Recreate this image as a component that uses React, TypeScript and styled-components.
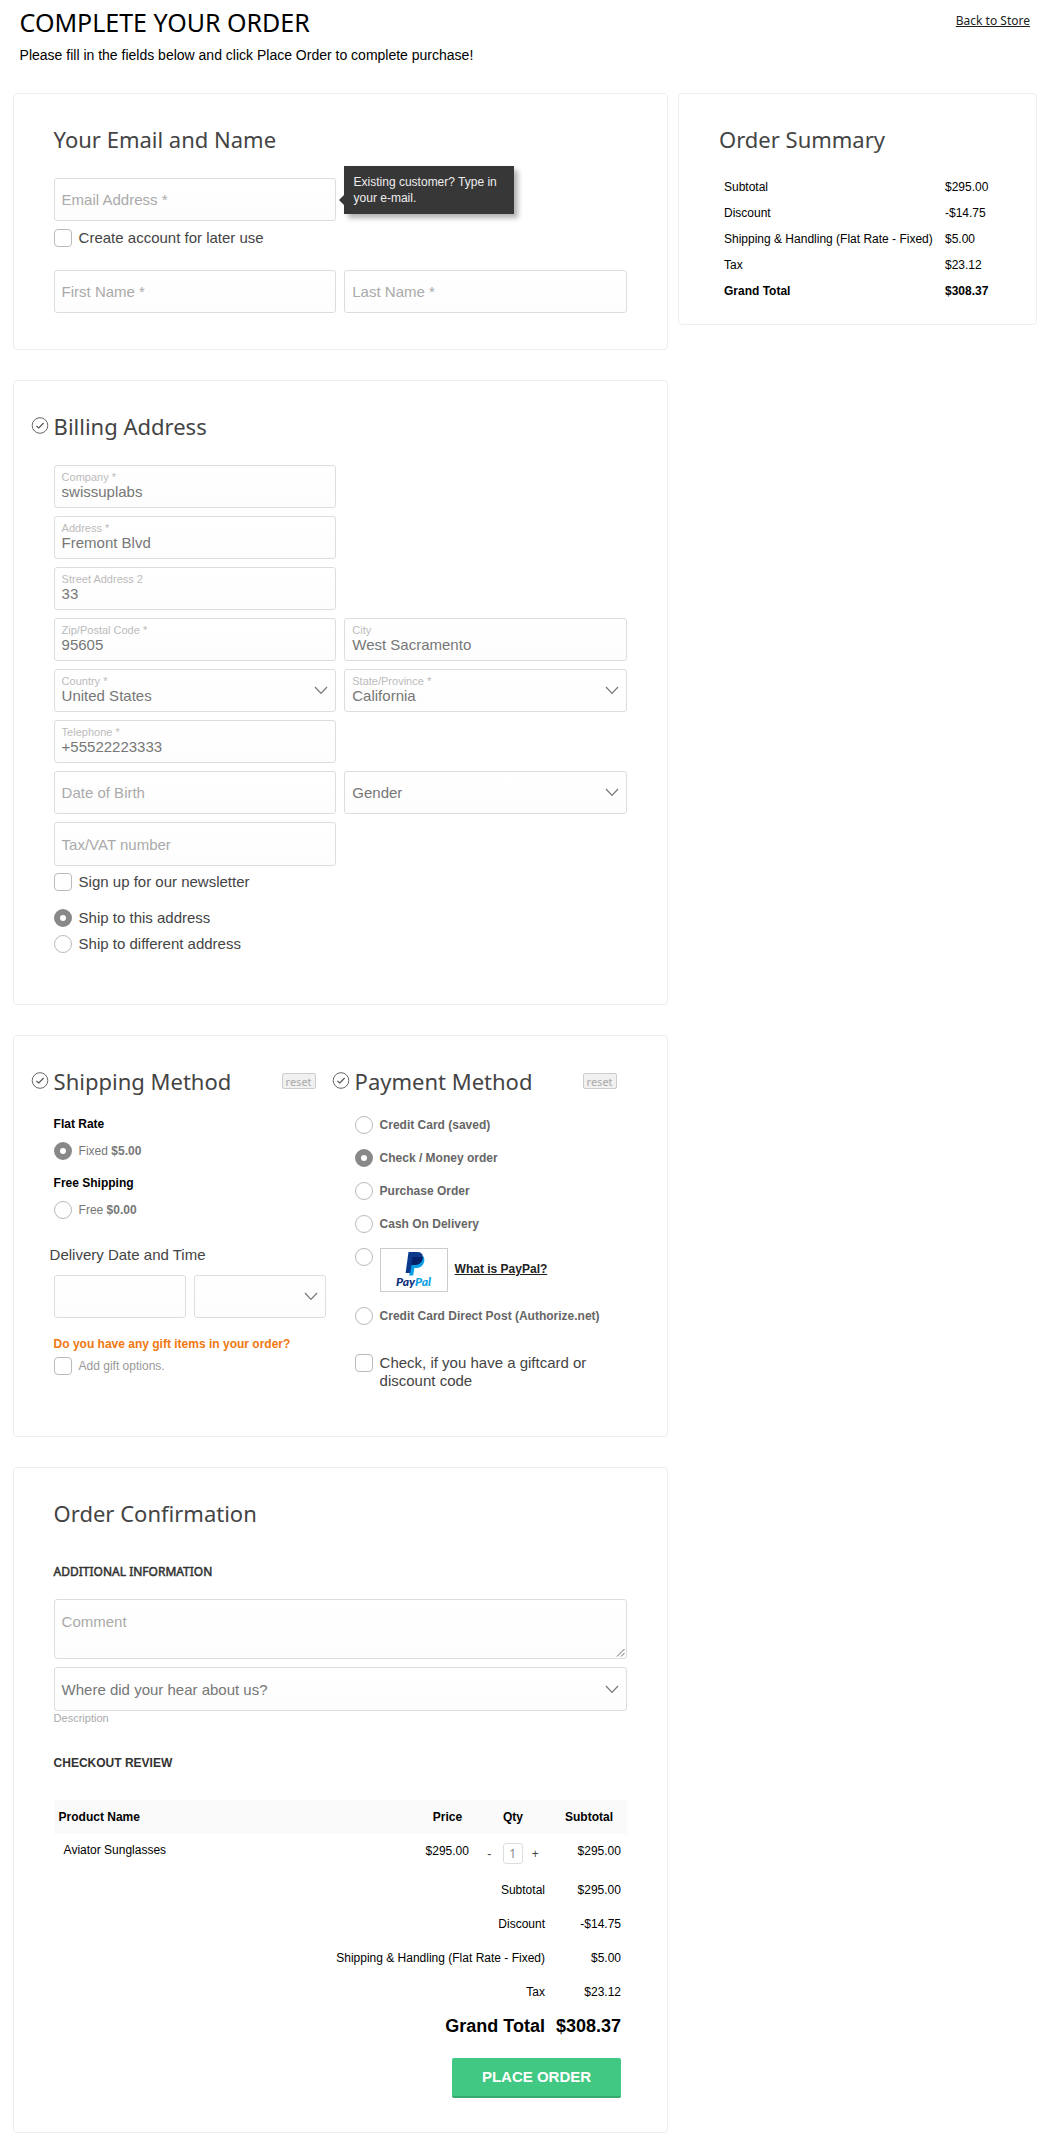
import React from "react";
import styled, { createGlobalStyle, css } from "styled-components";

const sans = '"Liberation Sans", Arial, Helvetica, sans-serif';
const noto = '"Noto Sans", "Open Sans", sans-serif';

const GlobalStyle = createGlobalStyle`
  * { box-sizing: border-box; }
  body { margin: 0; background: #fff; font-family: ${sans}; font-size: 12px; color: #000; }
  h1, h2, h3, p { margin: 0; font-weight: normal; }
  button { font-family: inherit; padding: 0; }
`;

const Page = styled.main`
  width: 1050px;
  height: 2145px;
  padding: 0 13px 0 12.6px;
`;
const Header = styled.header`
  display: flex;
  justify-content: space-between;
  height: 93px;
  padding: 0 7px 0 7px;
`;
const Title = styled.h1`
  font: 25px/34px ${noto};
  padding-top: 5px;
  color: #000;
`;
const Intro = styled.p`
  font-size: 14px;
  line-height: 20px;
  padding-top: 6px;
`;
const BackLink = styled.a`
  font: 12px/18px ${noto};
  color: #222;
  text-decoration: underline;
  margin-top: 12px;
`;
const Columns = styled.div`
  display: grid;
  grid-template-columns: 655.4px 359px;
  gap: 10px;
  align-items: start;
`;
const Stack = styled.div`
  display: flex;
  flex-direction: column;
  gap: 30px;
`;
const Card = styled.section<{ $h: number; $split?: boolean }>`
  height: ${(p) => p.$h}px;
  border: 1px solid #eee;
  border-radius: 4px;
  padding: 0 40px;
  ${(p) => p.$split && css`
    display: grid;
    grid-template-columns: 301px 1fr;
    padding-right: 20px;
  `}
`;
const Heading = styled.h2`
  position: relative;
  display: flex;
  align-items: center;
  padding-top: 29px;
  height: 61px;
  font: 22px/30px ${noto};
  color: #444;
`;
const DoneMark = styled.svg`
  position: absolute;
  left: -22.6px;
  top: 35px;
  width: 18px;
  height: 18px;
`;
const ResetButton = styled.button`
  margin-left: auto;
  width: 34px;
  height: 16px;
  border: 1px solid #ccc;
  border-radius: 2px;
  background: #f1f1f1;
  color: #aaa;
  font: 11px/13px ${noto};
`;
const Fields = styled.div<{ $mt: number }>`
  display: grid;
  grid-template-columns: 1fr 1fr;
  gap: 8px;
  margin-top: ${(p) => p.$mt}px;
`;
const FieldBox = styled.div<{ $h?: number; $start?: boolean; $wide?: boolean }>`
  position: relative;
  display: flex;
  flex-direction: column;
  height: ${(p) => p.$h ?? 43}px;
  ${(p) => p.$start && "grid-column: 1;"}
  ${(p) => p.$wide && "grid-column: 1 / -1;"}
  border: 1px solid #ddd;
  border-radius: 3px;
  padding: 0 7px;
  background: linear-gradient(#fff, #fdfdfd);
`;
const FloatLabel = styled.span`
  font-size: 11px;
  line-height: 13px;
  height: 11px;
  margin-top: 5px;
  color: #bbb;
`;
const Value = styled.span`
  font-size: 15px;
  line-height: 18px;
  margin-top: 1px;
  color: #777;
`;
const Placeholder = styled.span<{ $dark?: boolean; $mt?: number }>`
  font-size: 15px;
  line-height: 18px;
  margin-top: ${(p) => p.$mt ?? 12}px;
  color: ${(p) => (p.$dark ? "#777" : "#aaa")};
`;
const ChevronIcon = styled.svg`
  position: absolute;
  right: 7px;
  top: calc(50% - 4.5px);
  width: 14px;
  height: 9px;
`;
const GripIcon = styled.svg`
  position: absolute;
  right: 1px;
  bottom: 1px;
  width: 9px;
  height: 9px;
`;
const Tooltip = styled.div`
  position: absolute;
  left: 289px;
  top: -13px;
  width: 170px;
  height: 48px;
  padding: 8px 10px;
  background: #373737;
  color: #eee;
  font-size: 12px;
  line-height: 16px;
  box-shadow: 4px 4px 5px rgba(0, 0, 0, 0.3);
  &::before {
    content: "";
    position: absolute;
    left: -5px;
    top: 29px;
    border: 5px solid transparent;
    border-right-color: #373737;
    border-left: 0;
  }
`;
const Choice = styled.label<{ $mt?: number }>`
  display: flex;
  align-items: flex-start;
  gap: 7px;
  min-height: 18px;
  margin-top: ${(p) => p.$mt ?? 0}px;
`;
const ChoiceText = styled.span<{ $size?: number; $color?: string; $bold?: boolean }>`
  font-size: ${(p) => p.$size ?? 15}px;
  font-weight: ${(p) => (p.$bold ? "bold" : "normal")};
  line-height: 18px;
  color: ${(p) => p.$color ?? "#444"};
`;
const CheckMark = styled.i`
  flex: none;
  width: 18px;
  height: 18px;
  border: 1px solid #bbb;
  border-radius: 4px;
  background: #fff;
`;
const RadioMark = styled.i<{ $on?: boolean }>`
  flex: none;
  width: 18px;
  height: 18px;
  border: ${(p) => (p.$on ? "6px solid #888" : "1px solid #bbb")};
  border-radius: 50%;
  background: #fff;
`;
const Intros = styled.div``;
const MethodTitle = styled.p<{ $mt: number; $color?: string }>`
  font-weight: bold;
  line-height: 14px;
  margin-top: ${(p) => p.$mt}px;
  color: ${(p) => p.$color ?? "#000"};
`;
const DeliveryTitle = styled.p`
  font-size: 15px;
  line-height: 18px;
  margin: 27px 0 11px -4px;
  color: #444;
`;
const DeliveryFields = styled.div`
  display: grid;
  grid-template-columns: 132px 132px;
  gap: 8px;
`;
const MethodColumn = styled.div`
  ${Heading} { width: 262px; }
`;
const PayPalBox = styled.span`
  display: flex;
  width: 68px;
  height: 44px;
  border: 1px solid #ccc;
`;
const PayPalLink = styled.a`
  align-self: center;
  font-weight: bold;
  line-height: 14px;
  color: #222;
  text-decoration: underline;
  margin-top: -2px;
`;
const SubHeading = styled.h3<{ $mt: number; $noto?: boolean }>`
  font: bold 12px/16px ${sans};
  ${(p) => p.$noto && css`
    font: 12px/16px ${noto};
    -webkit-text-stroke: 0.5px #333;
  `}
  color: #333;
  margin-top: ${(p) => p.$mt}px;
`;
const Note = styled.p`
  font-size: 11px;
  line-height: 14px;
  color: #aaa;
`;
const SummaryTable = styled.dl`
  display: grid;
  grid-template-columns: 221px 1fr;
  grid-auto-rows: 26px;
  margin: 19px 0 0;
  padding-left: 5px;
  line-height: 26px;
  white-space: nowrap;
`;
const SummaryTerm = styled.dt<{ $bold?: boolean }>`
  font-weight: ${(p) => (p.$bold ? "bold" : "normal")};
`;
const SummaryValue = styled.dd<{ $bold?: boolean }>`
  margin: 0;
  font-weight: ${(p) => (p.$bold ? "bold" : "normal")};
`;
const cols = css`
  display: grid;
  grid-template-columns: 1fr 55px 76px 76px;
`;
const ReviewHead = styled.div`
  ${cols}
  margin-top: 29px;
  height: 34px;
  line-height: 34px;
  background: #fafafa;
  font-weight: bold;
  text-align: center;
  & > :first-child { text-align: left; padding-left: 5px; }
`;
const ReviewRow = styled.div`
  ${cols}
  height: 39px;
  line-height: 34px;
  text-align: right;
`;
const ProductName = styled.span`
  text-align: left;
  padding-left: 10px;
  line-height: 33px;
`;
const Cell = styled.span`
  padding-right: 6px;
`;
const Qty = styled.span`
  display: flex;
  align-items: center;
  justify-content: center;
  height: 21px;
  gap: 9px;
  margin-top: 9px;
  line-height: 20px;
  color: #444;
`;
const QtyBox = styled.span`
  width: 20px;
  height: 21px;
  margin-left: 2.5px;
  border: 1px solid #ddd;
  border-radius: 3px;
  text-align: center;
  font: 12px/20px ${noto};
  color: #888;
`;
const TotalRow = styled.div<{ $grand?: boolean }>`
  display: grid;
  grid-template-columns: 1fr 76px;
  height: 34px;
  line-height: 34px;
  text-align: right;
  white-space: nowrap;
  font-size: ${(p) => (p.$grand ? 18 : 12)}px;
  font-weight: ${(p) => (p.$grand ? "bold" : "normal")};
`;
const PlaceOrder = styled.button`
  display: block;
  width: 169px;
  height: 40px;
  margin: 15px 6px 0 auto;
  border: 0;
  border-bottom: 2px solid #38a86d;
  border-radius: 2px;
  background: #41c983;
  color: #fff;
  font: bold 15px/36px ${sans};
`;

const Done = () => (
  <DoneMark viewBox="0 0 18 18" fill="none" stroke="#555">
    <circle cx="9" cy="9.500" r="7.8" strokeWidth="0.9" />
    <path d="M5.400 10 7.800 12 12.600 7" strokeWidth="1.2" />
  </DoneMark>
);
const Chevron = () => (
  <ChevronIcon viewBox="0 0 14 9" fill="none" stroke="#777" strokeWidth="1.2">
    <path d="M1 1 7 7.400 13 1" />
  </ChevronIcon>
);
const PayPalLogo = () => (
  <svg width="66" height="42" viewBox="0 0 66 42">
    <path d="M42 7c1.600 1.600 1.600 4.300.9 6.500-1.200 3.800-4.200 5.500-8 5.500h-1.500l-1.200 7.500h-4.100L30 14z" fill="#0aa0e6" />
    <path d="M27.500 3h8.700c4.400 0 6.200 2.300 5.500 6.300-.9 4.700-4.200 6.700-8.400 6.700h-2.600L29.200 24h-4.600z" fill="#0b3a8c" />
    <path d="M31.500 8h9.200c1 .2 1 .8.900 1.500-.8 4.500-4.100 6.500-8.300 6.500h-3z" fill="#062266" />
    <text x="15" y="36.500" textLength="35" lengthAdjust="spacingAndGlyphs" fontFamily="Lato, sans-serif" fontSize="10.500" fontWeight="900" fontStyle="italic" fill="#0b2e7c">
      Pay<tspan fill="#0aa0e6">Pal</tspan>
    </text>
  </svg>
);

type FieldProps = { label: string; value?: string; select?: boolean; start?: boolean; h?: number; wide?: boolean; mt?: number };
const Field = ({ label, value, select, start, h, wide, mt }: FieldProps) => (
  <FieldBox $start={start} $h={h} $wide={wide}>
    {value ? (
      <>
        <FloatLabel>{label}</FloatLabel>
        <Value>{value}</Value>
      </>
    ) : (
      <Placeholder $dark={select} $mt={mt}>{label}</Placeholder>
    )}
    {select && <Chevron />}
  </FieldBox>
);
const Payment = ({ label, on, mt }: { label: string; on?: boolean; mt: number }) => (
  <Choice $mt={mt}>
    <RadioMark $on={on} />
    <ChoiceText $size={12} $bold $color="#666">{label}</ChoiceText>
  </Choice>
);

const totals: [string, string][] = [
  ["Subtotal", "$295.00"],
  ["Discount", "-$14.75"],
  ["Shipping & Handling (Flat Rate - Fixed)", "$5.00"],
  ["Tax", "$23.12"],
  ["Grand Total", "$308.37"],
];

export default function App() {
  return (
    <Page>
      <GlobalStyle />
      <Header>
        <Intros>
          <Title>COMPLETE YOUR ORDER</Title>
          <Intro>Please fill in the fields below and click Place Order to complete purchase!</Intro>
        </Intros>
        <BackLink>Back to Store</BackLink>
      </Header>
      <Columns>
        <Stack>
          <Card $h={257}>
            <Heading>Your Email and Name</Heading>
            <Fields $mt={23}>
              <FieldBox $start>
                <Placeholder>Email Address *</Placeholder>
                <Tooltip>Existing customer? Type in your e-mail.</Tooltip>
              </FieldBox>
            </Fields>
            <Choice $mt={8}>
              <CheckMark />
              <ChoiceText>Create account for later use</ChoiceText>
            </Choice>
            <Fields $mt={23}>
              <Field label="First Name *" />
              <Field label="Last Name *" />
            </Fields>
          </Card>

          <Card $h={625}>
            <Heading><Done />Billing Address</Heading>
            <Fields $mt={23}>
              <Field start label="Company *" value="swissuplabs" />
              <Field start label="Address *" value="Fremont Blvd" />
              <Field start label="Street Address 2" value="33" />
              <Field start label="Zip/Postal Code *" value="95605" />
              <Field label="City" value="West Sacramento" />
              <Field label="Country *" value="United States" select />
              <Field label="State/Province *" value="California" select />
              <Field start label="Telephone *" value="+55522223333" />
              <Field start label="Date of Birth" />
              <Field label="Gender" select />
              <Field start label="Tax/VAT number" h={44} mt={13} />
            </Fields>
            <Choice $mt={7}>
              <CheckMark />
              <ChoiceText>Sign up for our newsletter</ChoiceText>
            </Choice>
            <Choice $mt={18}>
              <RadioMark $on />
              <ChoiceText>Ship to this address</ChoiceText>
            </Choice>
            <Choice $mt={8}>
              <RadioMark />
              <ChoiceText>Ship to different address</ChoiceText>
            </Choice>
          </Card>

          <Card $h={402} $split>
            <MethodColumn>
              <Heading><Done />Shipping Method<ResetButton>reset</ResetButton></Heading>
              <MethodTitle $mt={20}>Flat Rate</MethodTitle>
              <Choice $mt={11}>
                <RadioMark $on />
                <ChoiceText $size={12} $color="#777">Fixed <b>$5.00</b></ChoiceText>
              </Choice>
              <MethodTitle $mt={16}>Free Shipping</MethodTitle>
              <Choice $mt={11}>
                <RadioMark />
                <ChoiceText $size={12} $color="#777">Free <b>$0.00</b></ChoiceText>
              </Choice>
              <DeliveryTitle>Delivery Date and Time</DeliveryTitle>
              <DeliveryFields>
                <FieldBox />
                <FieldBox><Chevron /></FieldBox>
              </DeliveryFields>
              <MethodTitle $mt={19} $color="#f0780f">Do you have any gift items in your order?</MethodTitle>
              <Choice $mt={6}>
                <CheckMark />
                <ChoiceText $size={12} $color="#999">Add gift options.</ChoiceText>
              </Choice>
            </MethodColumn>
            <MethodColumn>
              <Heading><Done />Payment Method<ResetButton>reset</ResetButton></Heading>
              <Payment mt={19} label="Credit Card (saved)" />
              <Payment mt={15} label="Check / Money order" on />
              <Payment mt={15} label="Purchase Order" />
              <Payment mt={15} label="Cash On Delivery" />
              <Choice $mt={15}>
                <RadioMark />
                <PayPalBox><PayPalLogo /></PayPalBox>
                <PayPalLink>What is PayPal?</PayPalLink>
              </Choice>
              <Payment mt={15} label="Credit Card Direct Post (Authorize.net)" />
              <Choice $mt={29}>
                <CheckMark />
                <ChoiceText>Check, if you have a giftcard or<br />discount code</ChoiceText>
              </Choice>
            </MethodColumn>
          </Card>

          <Card $h={666}>
            <Heading>Order Confirmation</Heading>
            <SubHeading $noto $mt={35}>ADDITIONAL INFORMATION</SubHeading>
            <Fields $mt={19}>
              <FieldBox $wide $h={60}>
                <Placeholder $mt={13}>Comment</Placeholder>
                <GripIcon viewBox="0 0 9 9" stroke="#555" strokeWidth="0.9">
                  <path d="M1 8.500 8.500 1M5 8.500 8.500 5" />
                </GripIcon>
              </FieldBox>
              <Field wide h={44} select mt={13} label="Where did your hear about us?" />
            </Fields>
            <Note>Description</Note>
            <SubHeading $mt={30}>CHECKOUT REVIEW</SubHeading>
            <ReviewHead>
              <span>Product Name</span><span>Price</span><span>Qty</span><span>Subtotal</span>
            </ReviewHead>
            <ReviewRow>
              <ProductName>Aviator Sunglasses</ProductName>
              <Cell>$295.00</Cell>
              <Qty><span>-</span><QtyBox>1</QtyBox><span>+</span></Qty>
              <Cell>$295.00</Cell>
            </ReviewRow>
            {totals.map(([label, amount], i) => (
              <TotalRow key={label} $grand={i === 4}>
                <Cell>{label}</Cell>
                <Cell>{amount}</Cell>
              </TotalRow>
            ))}
            <PlaceOrder>PLACE ORDER</PlaceOrder>
          </Card>
        </Stack>

        <Card $h={232} as="aside">
          <Heading>Order Summary</Heading>
          <SummaryTable>
            {totals.map(([label, amount], i) => (
              <React.Fragment key={label}>
                <SummaryTerm $bold={i === 4}>{label}</SummaryTerm>
                <SummaryValue $bold={i === 4}>{amount}</SummaryValue>
              </React.Fragment>
            ))}
          </SummaryTable>
        </Card>
      </Columns>
    </Page>
  );
}
